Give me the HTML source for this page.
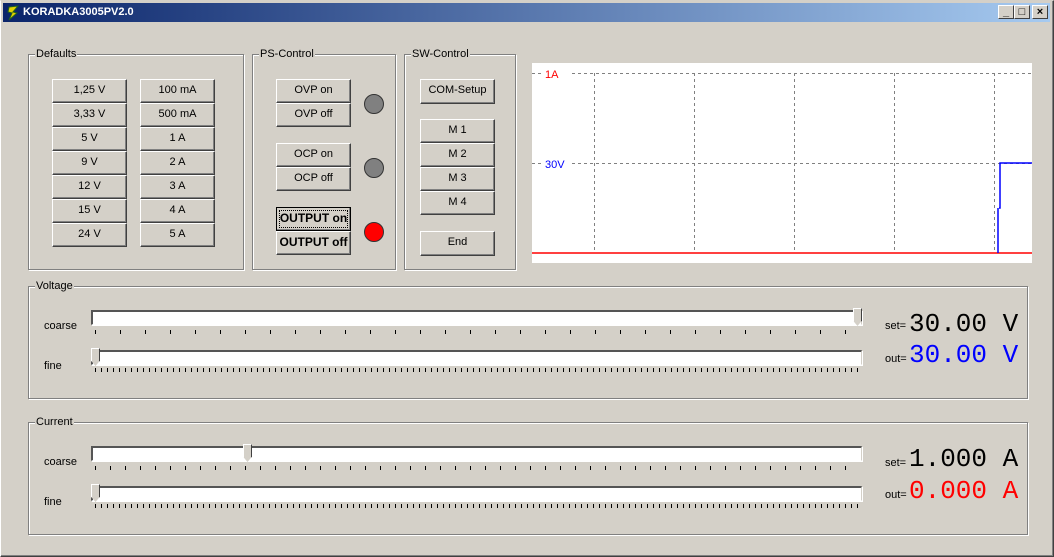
<!DOCTYPE html>
<html><head><meta charset="utf-8"><style>
*{margin:0;padding:0;box-sizing:border-box}
body{width:1054px;height:557px;background:#d4d0c8;position:relative;overflow:hidden;font-family:"Liberation Sans",sans-serif;font-size:11px;color:#000}
.a{position:absolute}
.win{left:0;top:0;width:1054px;height:557px;border-top:1px solid #d4d0c8;border-left:1px solid #fff;border-right:1px solid #404040;border-bottom:1px solid #404040;box-shadow:inset -1px -1px 0 #808080}
.title{left:3px;top:3px;width:1047px;height:19px;background:linear-gradient(90deg,#0a246a,#a6caf0);color:#fff;font-weight:bold;font-size:11px;line-height:19px;padding-left:20px}
.tb{top:5px;width:16px;height:14px;background:#d4d0c8;border-top:1px solid #fff;border-left:1px solid #fff;border-right:1px solid #404040;border-bottom:1px solid #404040;font-size:11px;font-weight:bold;text-align:center;line-height:12px}
.grp{border:1px solid #808080;box-shadow:1px 1px 0 #fff,inset 1px 1px 0 #fff}
.lg{background:#d4d0c8;padding:0 1px;line-height:11px}
.btn{background:#d4d0c8;border-top:1px solid #fff;border-left:1px solid #fff;border-right:1px solid #404040;border-bottom:1px solid #404040;box-shadow:inset -1px -1px 0 #808080;text-align:center;line-height:21px}
.led{width:20px;height:20px;border-radius:50%;border:1px solid #333;background:#808080}
.trk{height:15px;background:#fff;border-top:2px solid #555;border-left:2px solid #555;border-right:1px solid #d4d0c8;border-bottom:1px solid #fff;box-shadow:1px 1px 0 #fff}
.thumb{width:9px;height:18px;background:#d4d0c8;border-top:1px solid #fff;border-left:1px solid #fff;border-right:1px solid #404040;clip-path:polygon(0 0,100% 0,100% 70%,50% 100%,0 70%)}
.tick{height:4px}
.num{font-family:"Liberation Mono",monospace;font-size:26px;line-height:26px;letter-spacing:0}
</style></head><body>
<div class="a win"></div>
<div class="a title">KORADKA3005PV2.0</div>
<svg class="a" style="left:6px;top:5px" width="14" height="16"><path d="M3 2 L12 1 L7 7 L11 8 L3 15 L6 8 L2 7Z" fill="#e0d000" stroke="#206020" stroke-width="1"/></svg>
<div class="a tb" style="left:998px">_</div>
<div class="a tb" style="left:1014px">□</div>
<div class="a tb" style="left:1032px">×</div>

<div class="a grp" style="left:28px;top:54px;width:216px;height:216px"></div>
<div class="a lg" style="left:35px;top:49px">Defaults</div>
<div class="a" style="left:52px;top:79px">
<div class="btn a" style="left:0;top:0;width:75px;height:24px">1,25 V</div>
<div class="btn a" style="left:0;top:24px;width:75px;height:24px">3,33 V</div>
<div class="btn a" style="left:0;top:48px;width:75px;height:24px">5 V</div>
<div class="btn a" style="left:0;top:72px;width:75px;height:24px">9 V</div>
<div class="btn a" style="left:0;top:96px;width:75px;height:24px">12 V</div>
<div class="btn a" style="left:0;top:120px;width:75px;height:24px">15 V</div>
<div class="btn a" style="left:0;top:144px;width:75px;height:24px">24 V</div>
<div class="btn a" style="left:88px;top:0;width:75px;height:24px">100 mA</div>
<div class="btn a" style="left:88px;top:24px;width:75px;height:24px">500 mA</div>
<div class="btn a" style="left:88px;top:48px;width:75px;height:24px">1 A</div>
<div class="btn a" style="left:88px;top:72px;width:75px;height:24px">2 A</div>
<div class="btn a" style="left:88px;top:96px;width:75px;height:24px">3 A</div>
<div class="btn a" style="left:88px;top:120px;width:75px;height:24px">4 A</div>
<div class="btn a" style="left:88px;top:144px;width:75px;height:24px">5 A</div>
</div>

<div class="a grp" style="left:252px;top:54px;width:144px;height:216px"></div>
<div class="a lg" style="left:259px;top:49px">PS-Control</div>
<div class="btn a" style="left:276px;top:79px;width:75px;height:24px">OVP on</div>
<div class="btn a" style="left:276px;top:103px;width:75px;height:24px">OVP off</div>
<div class="btn a" style="left:276px;top:143px;width:75px;height:24px">OCP on</div>
<div class="btn a" style="left:276px;top:167px;width:75px;height:24px">OCP off</div>
<div class="btn a" style="left:276px;top:207px;width:75px;height:24px;font-weight:bold;font-size:12px;border:1px solid #000;outline:1px dotted #000;outline-offset:-4px">OUTPUT on</div>
<div class="btn a" style="left:276px;top:231px;width:75px;height:24px;font-weight:bold;font-size:12px">OUTPUT off</div>
<div class="a led" style="left:364px;top:94px"></div>
<div class="a led" style="left:364px;top:158px"></div>
<div class="a led" style="left:364px;top:222px;background:#f00"></div>

<div class="a grp" style="left:404px;top:54px;width:112px;height:216px"></div>
<div class="a lg" style="left:411px;top:49px">SW-Control</div>
<div class="btn a" style="left:420px;top:79px;width:75px;height:25px">COM-Setup</div>
<div class="btn a" style="left:420px;top:119px;width:75px;height:24px">M 1</div>
<div class="btn a" style="left:420px;top:143px;width:75px;height:24px">M 2</div>
<div class="btn a" style="left:420px;top:167px;width:75px;height:24px">M 3</div>
<div class="btn a" style="left:420px;top:191px;width:75px;height:24px">M 4</div>
<div class="btn a" style="left:420px;top:231px;width:75px;height:25px">End</div>

<svg class="a" style="left:532px;top:63px" width="500" height="200">
<rect width="500" height="200" fill="#fff"/>
<g stroke="#808080" stroke-dasharray="3,3" stroke-width="1">
<line x1="0" y1="10.5" x2="10" y2="10.5"/><line x1="40" y1="10.5" x2="500" y2="10.5"/>
<line x1="0" y1="100.5" x2="10" y2="100.5"/><line x1="40" y1="100.5" x2="500" y2="100.5"/>
<line x1="62.5" y1="10" x2="62.5" y2="190"/><line x1="162.5" y1="10" x2="162.5" y2="190"/>
<line x1="262.5" y1="10" x2="262.5" y2="190"/><line x1="362.5" y1="10" x2="362.5" y2="190"/>
<line x1="462.5" y1="10" x2="462.5" y2="190"/>
</g>
<text x="13" y="15" fill="#f00" font-family="Liberation Sans" font-size="11">1A</text>
<text x="13" y="105" fill="#00f" font-family="Liberation Sans" font-size="11">30V</text>
<line x1="0" y1="190" x2="500" y2="190" stroke="#f00" stroke-width="1.5"/>
<path d="M466 190 V145 M467 145 H468 V100 H500" stroke="#00f" stroke-width="1.5" fill="none"/>
</svg>

<div class="a grp" style="left:28px;top:286px;width:1000px;height:113px"></div>
<div class="a lg" style="left:35px;top:281px">Voltage</div>
<div class="a" style="left:44px;top:320px">coarse</div>
<div class="a" style="left:44px;top:360px">fine</div>
<div class="a trk" style="left:91px;top:310px;width:771px"></div>
<div class="a tick" style="left:95px;top:330px;width:765px;background:repeating-linear-gradient(90deg,#000 0 1px,transparent 1px 25px)"></div>
<div class="a thumb" style="left:853px;top:308px"></div>
<div class="a trk" style="left:91px;top:350px;width:771px"></div>
<div class="a tick" style="left:95px;top:368px;width:765px;background:repeating-linear-gradient(90deg,#000 0 1px,transparent 1px 6px)"></div>
<div class="a thumb" style="left:91px;top:348px"></div>
<div class="a" style="left:885px;top:320px">set=</div>
<div class="a num" style="left:909px;top:311px">30.00 V</div>
<div class="a" style="left:885px;top:353px">out=</div>
<div class="a num" style="left:909px;top:342px;color:#00f">30.00 V</div>

<div class="a grp" style="left:28px;top:422px;width:1000px;height:113px"></div>
<div class="a lg" style="left:35px;top:417px">Current</div>
<div class="a" style="left:44px;top:456px">coarse</div>
<div class="a" style="left:44px;top:496px">fine</div>
<div class="a trk" style="left:91px;top:446px;width:771px"></div>
<div class="a tick" style="left:95px;top:466px;width:765px;background:repeating-linear-gradient(90deg,#000 0 1px,transparent 1px 15px)"></div>
<div class="a thumb" style="left:243px;top:444px"></div>
<div class="a trk" style="left:91px;top:486px;width:771px"></div>
<div class="a tick" style="left:95px;top:504px;width:765px;background:repeating-linear-gradient(90deg,#000 0 1px,transparent 1px 6px)"></div>
<div class="a thumb" style="left:91px;top:484px"></div>
<div class="a" style="left:885px;top:457px">set=</div>
<div class="a num" style="left:909px;top:446px">1.000 A</div>
<div class="a" style="left:885px;top:489px">out=</div>
<div class="a num" style="left:909px;top:478px;color:#f00">0.000 A</div>
</body></html>
